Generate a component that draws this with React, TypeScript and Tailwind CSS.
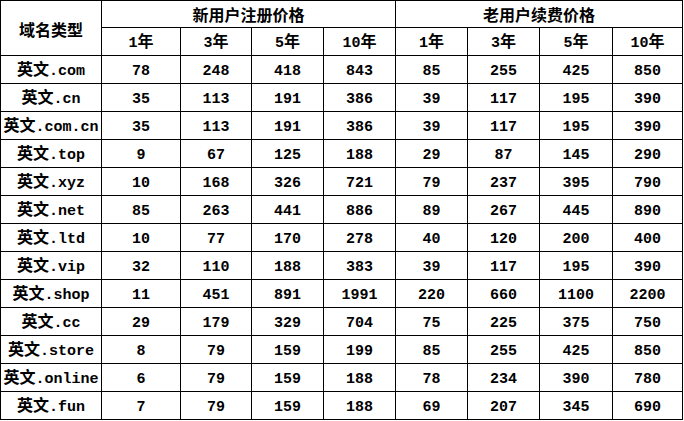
import React from "react";

const rows: [string, number[]][] = [
  ["com", [78, 248, 418, 843, 85, 255, 425, 850]],
  ["cn", [35, 113, 191, 386, 39, 117, 195, 390]],
  ["com.cn", [35, 113, 191, 386, 39, 117, 195, 390]],
  ["top", [9, 67, 125, 188, 29, 87, 145, 290]],
  ["xyz", [10, 168, 326, 721, 79, 237, 395, 790]],
  ["net", [85, 263, 441, 886, 89, 267, 445, 890]],
  ["ltd", [10, 77, 170, 278, 40, 120, 200, 400]],
  ["vip", [32, 110, 188, 383, 39, 117, 195, 390]],
  ["shop", [11, 451, 891, 1991, 220, 660, 1100, 2200]],
  ["cc", [29, 179, 329, 704, 75, 225, 375, 750]],
  ["store", [8, 79, 159, 199, 85, 255, 425, 850]],
  ["online", [6, 79, 159, 188, 78, 234, 390, 780]],
  ["fun", [7, 79, 159, 188, 69, 207, 345, 690]],
];

const years = ["1", "3", "5", "10"];

// splits a string into CJK and latin runs so each gets its own font size
const T = ({ text }: { text: string }) => {
  const parts = text.match(/[\u4e00-\u9fff]+|[^\u4e00-\u9fff]+/g) || [];
  return (
    <>
      {parts.map((p, i) =>
        /[\u4e00-\u9fff]/.test(p) ? (
          <span key={i} className="text-[16px] font-['Noto_Sans_CJK_SC',sans-serif]">
            {p}
          </span>
        ) : (
          <span key={i} className="text-[15px] font-['Liberation_Mono',monospace]">
            {p}
          </span>
        )
      )}
    </>
  );
};

const Cell = ({ children, className = "" }: { children: React.ReactNode; className?: string }) => (
  <div className={`bg-white flex items-center justify-center whitespace-nowrap leading-none ${className}`}>
    <div>{children}</div>
  </div>
);

export default function App() {
  return (
    <div className="w-[684px] h-[421px] bg-white">
      <div className="grid w-[683px] bg-black p-px gap-px font-bold text-black grid-cols-[100px_78px_70px_71px_71px_71px_71px_72px_69px] grid-rows-[26px_27px_repeat(13,27px)]">
        <Cell className="row-span-2 pt-[2px]">
          <T text="域名类型" />
        </Cell>
        <Cell className="col-span-4">
          <T text="新用户注册价格" />
        </Cell>
        <Cell className="col-span-4">
          <T text="老用户续费价格" />
        </Cell>
        {[...years, ...years].map((y, i) => (
          <Cell key={i}>
            <T text={`${y}年`} />
          </Cell>
        ))}
        {rows.map(([tld, prices]) => (
          <React.Fragment key={tld}>
            <Cell>
              <T text={`英文.${tld}`} />
            </Cell>
            {prices.map((p, i) => (
              <Cell key={i}>
                <T text={String(p)} />
              </Cell>
            ))}
          </React.Fragment>
        ))}
      </div>
    </div>
  );
}
